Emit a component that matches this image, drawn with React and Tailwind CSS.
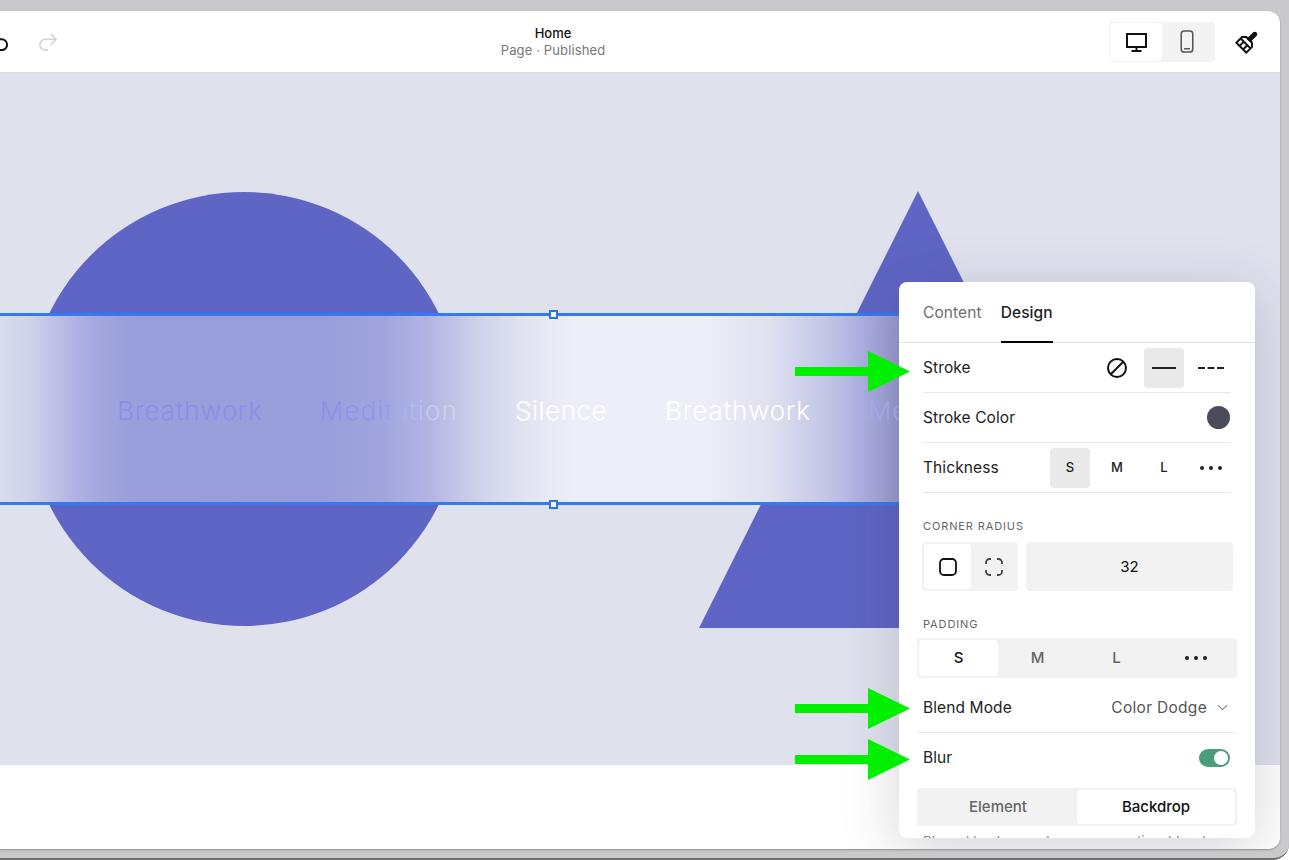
import { ChevronDown } from "lucide-react";

function Dots() {
  return (
    <svg width="24" height="6" viewBox="0 0 24 6" fill="currentColor">
      <circle cx="3" cy="3" r="2" />
      <circle cx="12" cy="3" r="2" />
      <circle cx="21" cy="3" r="2" />
    </svg>
  );
}

function Arrow({ className }) {
  return (
    <svg className={`absolute left-[795px] ${className}`} width="115" height="41" viewBox="0 0 115 41" fill="#00f000">
      <path d="M0 16h73V0l42 20.5L73 41V25H0z" />
    </svg>
  );
}

function Row({ label, children }) {
  return (
    <div className="h-[50px] mx-6 flex items-center justify-between border-b border-[#e8e8e8]">
      <span className="text-[15.5px] tracking-[0.1px] text-[#222]">{label}</span>
      {children}
    </div>
  );
}

function Opt({ active, children }) {
  return (
    <div className={`w-10 h-10 rounded flex items-center justify-center ${active ? "bg-[#e9e9e9]" : ""}`}>
      {children}
    </div>
  );
}

function SectionLabel({ children, className }) {
  return <div className={`ml-6 text-[11px] leading-none tracking-[0.08em] text-[#666] ${className}`}>{children}</div>;
}

function Panel() {
  return (
    <div className="absolute left-[899px] top-[271px] w-[356px] h-[556px] bg-white rounded-lg overflow-hidden shadow-[0_12px_60px_rgba(40,40,60,0.2)]">
      <div className="h-[61px] px-6 flex gap-[19px] border-b border-[#e2e2e2]">
        <span className="mt-[21px] text-[15.5px] tracking-[0.1px] leading-5 text-[#6e6e6e]">Content</span>
        <div className="relative">
          <span className="block mt-[21px] text-[15.5px] tracking-[0.1px] leading-5 font-medium text-[#222]">Design</span>
          <div className="absolute left-0 right-0 bottom-[-1px] h-0.5 bg-black" />
        </div>
      </div>

      <Row label="Stroke">
        <div className="flex items-center gap-[7px]">
          <Opt>
            <svg width="22" height="22" viewBox="0 0 22 22" fill="none" stroke="#111" strokeWidth="2">
              <circle cx="11" cy="11" r="9" />
              <path d="M5 17 17 5" />
            </svg>
          </Opt>
          <Opt active>
            <div className="w-6 h-0.5 bg-[#222]" />
          </Opt>
          <Opt>
            <svg width="26" height="2" viewBox="0 0 26 2" fill="#222">
              <path d="M0 0h7v2H0zM9.500 0h7v2h-7zM19 0h7v2h-7z" />
            </svg>
          </Opt>
        </div>
      </Row>
      <Row label="Stroke Color">
        <div className="w-[23px] h-[23px] rounded-full bg-[#4b4b5b] mr-px" />
      </Row>
      <Row label="Thickness">
        <div className="flex items-center gap-[7px] text-[13px] font-medium text-[#222]">
          <Opt active>S</Opt>
          <Opt>M</Opt>
          <Opt>L</Opt>
          <Opt><Dots /></Opt>
        </div>
      </Row>

      <SectionLabel className="mt-[28px]">CORNER RADIUS</SectionLabel>
      <div className="mt-[10px] ml-[23px] flex gap-2">
        <div className="w-24 h-[49px] p-0.5 rounded bg-[#f2f2f2] flex">
          <div className="w-[47px] rounded bg-white flex items-center justify-center">
            <svg width="18" height="18" viewBox="0 0 18 18" fill="none" stroke="#111" strokeWidth="1.800">
              <rect x="1" y="1" width="16" height="16" rx="4" />
            </svg>
          </div>
          <div className="flex-1 flex items-center justify-center">
            <svg width="18" height="18" viewBox="0 0 18 18" fill="none" stroke="#444" strokeWidth="1.800">
              <path d="M1 6V4.500A3.500 3.500 0 0 1 4.500 1H6M12 1h1.500A3.500 3.500 0 0 1 17 4.500V6M17 12v1.500a3.500 3.500 0 0 1-3.500 3.500H12M6 17H4.500A3.500 3.500 0 0 1 1 13.500V12" />
            </svg>
          </div>
        </div>
        <div className="w-[207px] h-[49px] pt-px rounded bg-[#f2f2f2] flex items-center justify-center text-[15px] text-[#111]">
          32
        </div>
      </div>

      <SectionLabel className="mt-[28px]">PADDING</SectionLabel>
      <div className="mt-[8px] ml-[18px] w-80 h-10 p-0.5 rounded bg-[#f2f2f2] flex text-[15px] font-medium text-[#666]">
        <div className="w-[79px] pt-px rounded bg-white text-[#111] flex items-center justify-center">S</div>
        <div className="w-[79px] pt-px flex items-center justify-center">M</div>
        <div className="w-[79px] pt-px flex items-center justify-center">L</div>
        <div className="flex-1 flex items-center justify-center text-[#222]"><Dots /></div>
      </div>

      <div className="mt-[5px] mx-[19px] h-[50px] px-[5px] flex items-center justify-between border-b border-[#e8e8e8]">
        <span className="text-[15.5px] tracking-[0.1px] text-[#222]">Blend Mode</span>
        <div className="flex items-center gap-[7px] text-[15.5px] tracking-[0.3px] text-[#555]">
          Color Dodge
          <ChevronDown size={17} strokeWidth={1.5} color="#888" />
        </div>
      </div>
      <div className="mx-6 h-[50px] flex items-center justify-between">
        <span className="text-[15.5px] tracking-[0.1px] text-[#222]">Blur</span>
        <div className="w-[31px] h-[18px] mr-px p-0.5 rounded-full bg-[#4a9d7c] flex justify-end">
          <div className="w-3.5 h-3.5 rounded-full bg-white" />
        </div>
      </div>

      <div className="mt-[5px] ml-[18px] w-80 h-[38px] rounded border-2 border-[#f2f2f2] bg-[#f2f2f2] flex text-[15px] font-medium">
        <div className="w-[158px] pt-px flex items-center justify-center text-[#666]">Element</div>
        <div className="flex-1 pt-px rounded bg-white flex items-center justify-center text-[#111]">Backdrop</div>
      </div>
      <p className="mt-[7px] ml-6 text-[13.500px] leading-4 text-[#888] whitespace-nowrap">Blurred backgrounds are more noticeable when</p>
    </div>
  );
}

function Handle({ className }) {
  return <div className={`absolute left-[549px] w-[9px] h-[9px] bg-white border-2 border-[#2a75e0] ${className}`} />;
}

function Band() {
  return (
    <div className="absolute left-0 w-[1000px] top-[240px] h-[192px] border-y-[3px] border-[#2f7bef] bg-[linear-gradient(90deg,#d9dcee_0px,#cfd2ea_30px,#babde5_60px,#a7aadf_90px,#9a9eda_130px,#999ddb_320px,#a1a4dd_380px,#b2b5e2_430px,#cdd0ea_475px,#e2e4f2_525px,#eceef8_575px,#eceef8_700px,#dfe1f0_770px,#c3c6e7_825px,#aeb1e0_860px,#9799ce_899px)]">
      <div className="h-full relative text-[26px] font-light leading-none tracking-[0.03em]">
        <span className="absolute left-[117px] top-[82px] text-[#8790ea]">Breathwork</span>
        <span className="absolute left-[320px] top-[82px] tracking-[0.042em] text-transparent bg-clip-text bg-[linear-gradient(90deg,#8790ea_0%,#8f98ea_45%,#c8cbef_80%,#d6d8f2_100%)]">Meditation</span>
        <span className="absolute left-[515px] top-[82px] tracking-[0.02em] text-white">Silence</span>
        <span className="absolute left-[665px] top-[82px] text-white">Breathwork</span>
        <span className="absolute left-[868px] top-[82px] text-[#a8aef0]">Me</span>
      </div>
    </div>
  );
}

export default function App() {
  return (
    <div className="w-[1289px] h-[860px] overflow-hidden bg-[#c9c9cb] pt-[11px] pr-[9px] pb-[11px] font-[Inter,sans-serif] border-b-2 border-[#6f6f6f] rounded-br-2xl">
      <div className="relative h-[838px] bg-white rounded-r-xl overflow-hidden flex flex-col shadow-[0_1px_2px_rgba(0,0,0,0.3)]">
        <header className="h-[62px] shrink-0 border-b border-[#dcdde6] flex items-center pr-[21px]">
          <div className="flex items-center gap-[29px] -ml-[11px]">
            <svg className="-scale-x-100" width="20" height="18" viewBox="0 0 22 20" fill="none" stroke="#111" strokeWidth="2.200">
              <path d="M14 1l6 6-6 6M20 7H8a6 6 0 0 0 0 12h3" />
            </svg>
            <svg width="20" height="18" viewBox="0 0 22 20" fill="none" stroke="#d2d2d2" strokeWidth="1.800">
              <path d="M14 1l6 6-6 6M20 7H8a6 6 0 0 0 0 12h3" />
            </svg>
          </div>
          <div className="absolute left-[453px] w-[200px] text-center text-[13px] leading-[17px]">
            <div className="font-medium text-[#111]">Home</div>
            <div className="text-[#777] tracking-[0.12px]">Page · Published</div>
          </div>
          <div className="ml-auto flex items-center gap-[20px]">
            <div className="w-[106px] h-10 p-px rounded bg-[#f3f3f3] flex">
              <div className="w-[52px] pt-0.5 rounded bg-white flex items-center justify-center">
                <svg width="21" height="19" viewBox="0 0 21 19" fill="none" stroke="#111" strokeWidth="2">
                  <rect x="1" y="1" width="19" height="13" />
                  <path d="M10.500 14v4M5.500 18h10" />
                </svg>
              </div>
              <div className="flex-1 flex items-center justify-center pr-0.5">
                <svg width="14" height="23" viewBox="0 0 14 24" fill="none" stroke="#555" strokeWidth="1.600">
                  <rect x="1" y="1" width="12" height="22" rx="3" />
                  <path d="M4 19.500h6" />
                </svg>
              </div>
            </div>
            <svg width="24" height="24" viewBox="0 0 24 24" fill="none" stroke="#111" strokeWidth="2">
              <g transform="rotate(45 12 12)">
                <path d="M10.500 9V1a1.500 1.500 0 0 1 3 0v8z" fill="#111" />
                <path d="M8 9h8l3 3v8H5v-8z" />
                <path d="M5 14h14M9.500 14v6M14.500 14v6" />
              </g>
            </svg>
          </div>
        </header>

        <main className="relative flex-1 bg-[#dfe2ed]">
          <div className="absolute left-[27px] top-[119px] w-[434px] h-[434px] rounded-full bg-[#5f65c4]" />
          <svg className="absolute left-[699px] top-[118px]" width="438" height="438" viewBox="0 0 438 438" fill="#5f65c4">
            <path d="M219 0 438 437H0z" />
          </svg>
          <Band />
          <Handle className="top-[237px]" />
          <Handle className="top-[427px]" />
        </main>

        <footer className="h-[84px] shrink-0 bg-white" />

        <Panel />

        <Arrow className="top-[340px]" />
        <Arrow className="top-[677px]" />
        <Arrow className="top-[728px]" />
      </div>
    </div>
  );
}
